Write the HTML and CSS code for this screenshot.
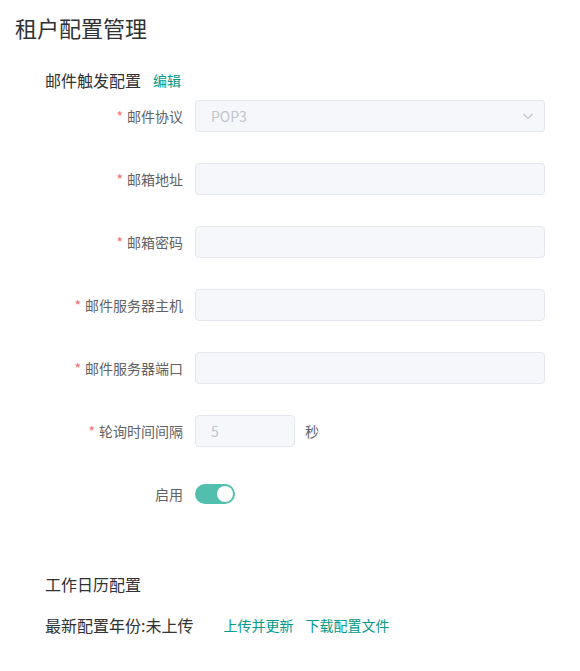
FILE: index.html
```html
<!DOCTYPE html>
<html lang="zh-CN">
<head>
<meta charset="utf-8">
<title>租户配置管理</title>
<link rel="stylesheet" href="styles.css">
</head>
<body>
<div class="page">
  <h1 class="title">租户配置管理</h1>
  <section class="section">
    <div class="section-head">
      <span class="section-title">邮件触发配置</span>
      <a class="link">编辑</a>
    </div>
    <div class="form">
      <div class="row">
        <label class="label"><span class="star">*</span>邮件协议</label>
        <div class="control">
          <div class="input select">
            <span class="value">POP3</span>
            <svg class="arrow" width="12" height="12" viewBox="0 0 12 12"><path d="M1.5 4 L6 8.5 L10.5 4" fill="none" stroke="#c0c4cc" stroke-width="1.1"/></svg>
          </div>
        </div>
      </div>
      <div class="row">
        <label class="label"><span class="star">*</span>邮箱地址</label>
        <div class="control"><div class="input"></div></div>
      </div>
      <div class="row">
        <label class="label"><span class="star">*</span>邮箱密码</label>
        <div class="control"><div class="input"></div></div>
      </div>
      <div class="row">
        <label class="label"><span class="star">*</span>邮件服务器主机</label>
        <div class="control"><div class="input"></div></div>
      </div>
      <div class="row">
        <label class="label"><span class="star">*</span>邮件服务器端口</label>
        <div class="control"><div class="input"></div></div>
      </div>
      <div class="row">
        <label class="label"><span class="star">*</span>轮询时间间隔</label>
        <div class="control">
          <div class="input short"><span class="value">5</span></div>
          <span class="unit">秒</span>
        </div>
      </div>
      <div class="row">
        <label class="label">启用</label>
        <div class="control">
          <span class="switch"><span class="knob"></span></span>
        </div>
      </div>
    </div>
  </section>
  <section class="section calendar">
    <div class="section-title">工作日历配置</div>
    <div class="cal-row">
      <span class="cal-text">最新配置年份:未上传</span>
      <a class="link">上传并更新</a>
      <a class="link">下载配置文件</a>
    </div>
  </section>
</div>
</body>
</html>
```
FILE: styles.css
```css
* { box-sizing: border-box; }
body {
  margin: 0;
  background: #fff;
  font-family: "Noto Sans CJK SC", "Noto Sans", sans-serif;
  color: #303133;
}
.page {
  padding: 12px 0 0 15px;
}
.title {
  margin: 0;
  font-size: 22px;
  font-weight: 400;
  line-height: 30px;
  color: #303133;
}
.section {
  padding-left: 30px;
}
.section-head {
  margin-top: 26px;
  display: flex;
  align-items: center;
  gap: 12px;
  height: 24px;
}
.section-title {
  font-size: 16px;
  line-height: 24px;
  color: #303133;
}
.link {
  font-size: 14px;
  color: #00998a;
  cursor: pointer;
}
.form {
  margin-top: 8px;
}
.row {
  display: flex;
  align-items: center;
  height: 32px;
  margin-bottom: 31px;
}
.label {
  width: 150px;
  padding-right: 12px;
  text-align: right;
  font-size: 14px;
  color: #606266;
}
.star {
  color: #f56c6c;
  margin-right: 4px;
}
.control {
  display: flex;
  align-items: center;
  flex: 0 0 350px;
}
.input {
  width: 350px;
  height: 32px;
  background: #f5f7fa;
  border: 1px solid #e4e7ed;
  border-radius: 4px;
  display: flex;
  align-items: center;
  padding: 0 15px;
}
.input.short {
  width: 100px;
}
.value {
  color: #c0c4cc;
  font-size: 14px;
}
.select {
  justify-content: space-between;
  padding-right: 10px;
}
.unit {
  margin-left: 10px;
  font-size: 14px;
  color: #606266;
}
.switch {
  width: 40px;
  height: 20px;
  border-radius: 10px;
  background: #52bfae;
  position: relative;
  display: inline-block;
}
.knob {
  position: absolute;
  top: 2px;
  right: 2px;
  width: 16px;
  height: 16px;
  border-radius: 50%;
  background: #fff;
}
.calendar {
  margin-top: 62px;
}
.calendar .section-title {
  line-height: 24px;
}
.cal-row {
  margin-top: 17px;
  display: flex;
  align-items: center;
  height: 24px;
}
.cal-text {
  font-size: 16px;
  color: #303133;
  margin-right: 30px;
}
.cal-row .link + .link {
  margin-left: 12px;
}
```
